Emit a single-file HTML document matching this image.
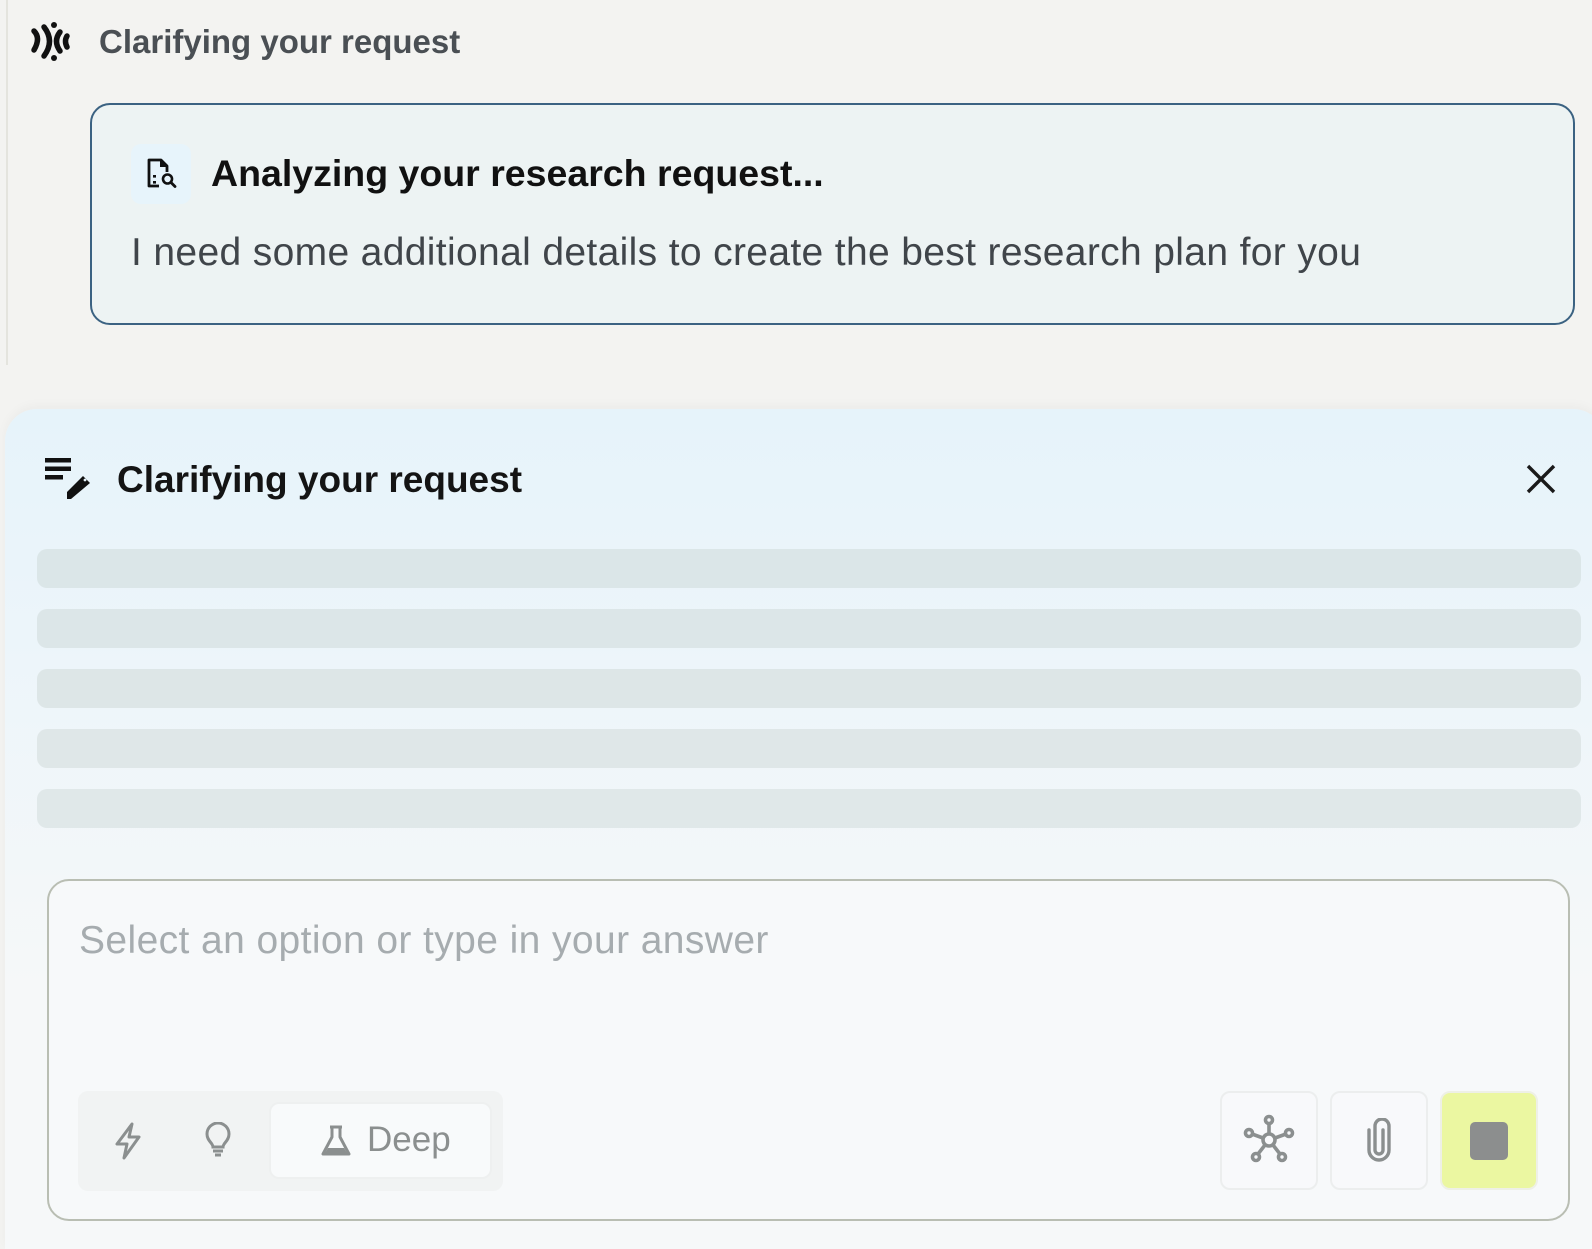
<!DOCTYPE html>
<html><head><meta charset="utf-8"><style>
*{margin:0;padding:0;box-sizing:border-box}
html,body{width:1592px;height:1235px;overflow:hidden;background:#f3f3f1;font-family:"Liberation Sans",Arial,sans-serif}
.abs{position:absolute;white-space:nowrap}
</style></head><body>
<div class="abs" style="left:6px;top:0;width:2px;height:365px;background:#e4e4de"></div>
<svg class="abs" style="left:28px;top:20px" width="44" height="44" viewBox="0 0 44 44">
<g fill="none" stroke="#111" stroke-width="5.5" stroke-linecap="round">
<path d="M6 11 Q13 18 6 30"/>
<path d="M16 7 Q27 21 16 36"/>
<path d="M32 12 Q25 21 32 31"/>
<path d="M39 16 Q36 21 39 27"/>
</g>
<circle cx="26" cy="5" r="3" fill="#111"/><circle cx="26" cy="38" r="3" fill="#111"/>
</svg>
<div class="abs" style="left:99px;top:23px;font-size:33px;font-weight:bold;color:#4a4f54">Clarifying your request</div>

<div class="abs" style="left:90px;top:103px;width:1485px;height:222px;border:2px solid #3b6282;border-radius:20px;background:#edf3f3"></div>
<div class="abs" style="left:131px;top:144px;width:60px;height:60px;border-radius:10px;background:#e7f4fb"></div>
<svg class="abs" style="left:145px;top:157px" width="34" height="34" viewBox="0 0 34 34">
<path d="M14 29H4V3h12l6 6v6" fill="none" stroke="#111" stroke-width="2.8" stroke-linejoin="round"/>
<path d="M16 3v6h6" fill="#111" stroke="#111" stroke-width="2"/>
<circle cx="22.5" cy="22" r="4.5" fill="none" stroke="#111" stroke-width="2.6"/>
<path d="M26 25.5l4 4" stroke="#111" stroke-width="2.8" stroke-linecap="round"/>
<rect x="8" y="18" width="3" height="2.6" fill="#111"/><rect x="8" y="24" width="3" height="2.6" fill="#111"/>
</svg>
<div class="abs" style="left:211px;top:152px;font-size:37.5px;font-weight:bold;color:#111">Analyzing your research request...</div>
<div class="abs" style="left:131px;top:231px;font-size:39px;letter-spacing:0.35px;color:#40454a">I need some additional details to create the best research plan for you</div>

<div class="abs" style="left:5px;top:409px;width:1600px;height:840px;border-radius:32px 32px 0 0;background:linear-gradient(#e6f3fa,#f6f8f9 70%);box-shadow:0 -4px 10px rgba(0,0,0,0.03)"></div>
<svg class="abs" style="left:44px;top:458px" width="50" height="44" viewBox="0 0 50 44">
<rect x="1" y="0" width="26" height="4.5" fill="#111"/><rect x="1" y="8.5" width="26" height="4.5" fill="#111"/><rect x="1" y="17" width="18" height="4.5" fill="#111"/>
<path d="M27 41l-4 0 0-7 16-16 7 7z" fill="#111"/><circle cx="41" cy="22" r="1.4" fill="#e6f3fa"/>
</svg>
<div class="abs" style="left:117px;top:459px;font-size:37px;font-weight:bold;color:#141414">Clarifying your request</div>
<svg class="abs" style="left:1526px;top:464px" width="30" height="30" viewBox="0 0 30 30"><path d="M2 2L28 28M28 2L2 28" stroke="#1a1a1a" stroke-width="3.4"/></svg>

<div class="abs" style="left:37px;top:549px;width:1544px;height:39px;border-radius:10px;background:#dbe6e8"></div>
<div class="abs" style="left:37px;top:609px;width:1544px;height:39px;border-radius:10px;background:#dce6e8"></div>
<div class="abs" style="left:37px;top:669px;width:1544px;height:39px;border-radius:10px;background:#dde6e7"></div>
<div class="abs" style="left:37px;top:729px;width:1544px;height:39px;border-radius:10px;background:#dfe7e8"></div>
<div class="abs" style="left:37px;top:789px;width:1544px;height:39px;border-radius:10px;background:#e0e8e9"></div>

<div class="abs" style="left:47px;top:879px;width:1523px;height:342px;border:2px solid #b9beb3;border-radius:22px;background:#f7f9fa"></div>
<div class="abs" style="left:79px;top:919px;font-size:39px;letter-spacing:0.4px;color:#a6acaf">Select an option or type in your answer</div>

<div class="abs" style="left:78px;top:1091px;width:425px;height:100px;border-radius:10px;background:#f1f3f3"></div>
<svg class="abs" style="left:113px;top:1122px" width="30" height="38" viewBox="0 0 30 38"><path d="M19 2L4 22h10l-3 14 15-21H16z" fill="none" stroke="#8b8f8f" stroke-width="3" stroke-linejoin="round"/></svg>
<svg class="abs" style="left:204px;top:1122px" width="28" height="38" viewBox="0 0 28 38"><path d="M9 25c0-4-6-6-6-13a11 11 0 0 1 22 0c0 7-6 9-6 13z" fill="none" stroke="#8b8f8f" stroke-width="3"/><path d="M9 29h10M11 33h6" stroke="#8b8f8f" stroke-width="3"/></svg>
<div class="abs" style="left:269px;top:1102px;width:223px;height:77px;border-radius:10px;background:#f8fafb;border:2px solid #eef0f0"></div>
<svg class="abs" style="left:320px;top:1124px" width="32" height="34" viewBox="0 0 32 34"><path d="M10 3h12M12 3v10L3 30h26L20 13V3" fill="none" stroke="#8b8f8f" stroke-width="3" stroke-linejoin="round"/><path d="M8 24h16l3 5H5z" fill="#8b8f8f"/></svg>
<div class="abs" style="left:367px;top:1120px;font-size:35px;color:#8b8f8f">Deep</div>

<div class="abs" style="left:1220px;top:1091px;width:98px;height:99px;border-radius:10px;border:2px solid #eceeee;background:#f8f9fb"></div>
<svg class="abs" style="left:1242px;top:1114px" width="54" height="52" viewBox="0 0 54 52"><g fill="none" stroke="#8b8f8f" stroke-width="3.6"><circle cx="27" cy="26" r="6"/><circle cx="27" cy="6" r="3.5"/><circle cx="7" cy="19" r="3.5"/><circle cx="47" cy="19" r="3.5"/><circle cx="14" cy="43" r="3.5"/><circle cx="40" cy="43" r="3.5"/><path d="M27 10v10M10 20l11 4M44 20l-11 4M16 40l7-9M38 40l-7-9"/></g></svg>
<div class="abs" style="left:1330px;top:1091px;width:98px;height:99px;border-radius:10px;border:2px solid #eceeee;background:#f8f9fb"></div>
<svg class="abs" style="left:1364px;top:1118px" width="30" height="46" viewBox="0 0 30 46"><path d="M19 12v20a4 4 0 0 1-8 0V8a7 7 0 0 1 14 0v24a10 10 0 0 1-20 0V12" fill="none" stroke="#8b8f8f" stroke-width="3.4" stroke-linecap="round"/></svg>
<div class="abs" style="left:1440px;top:1091px;width:98px;height:99px;border-radius:10px;border:2px solid #eef0e6;background:#ebf7a1"></div>
<div class="abs" style="left:1470px;top:1122px;width:38px;height:38px;border-radius:5px;background:#8c8e8e"></div>
</body></html>
